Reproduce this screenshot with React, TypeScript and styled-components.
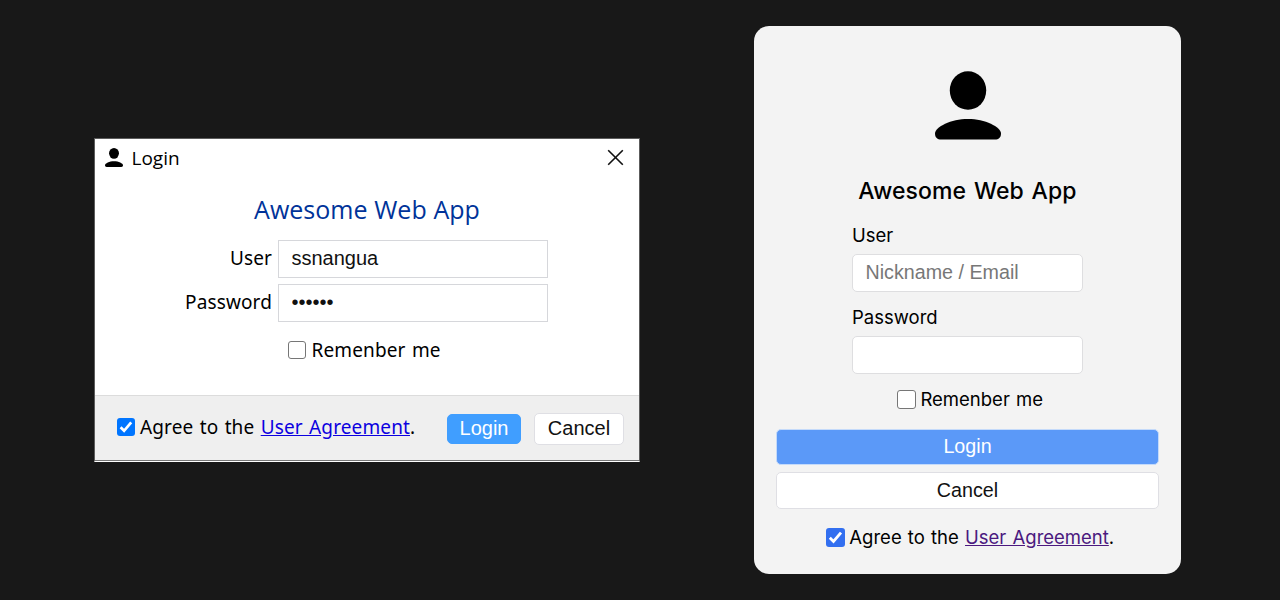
import React from 'react';
import styled, { createGlobalStyle, css } from 'styled-components';

const Global = createGlobalStyle`
  * { box-sizing: border-box; }
  body { margin: 0; background: #181818; color: #000; }
  p, h1, h2 { margin: 0; }
`;

const Stage = styled.main`
  display: flex;
  width: 1280px;
  height: 600px;
  padding: 26px 99px 26px 94px;
  justify-content: space-between;
  overflow: hidden;
`;

/* Shared controls */
const dialogText = css`
  font: 400 19px/24px "Noto Sans", sans-serif;
  letter-spacing: 0.12px;
  word-spacing: 1.3px;
`;

const cardText = css`
  font: 400 18.5px/24px Inter, sans-serif;
  word-spacing: 1px;
`;

const Input = styled.input`
  display: block;
  height: 38px;
  border: 1px solid #d6d7db;
  padding: 0 12px 2px 12.5px;
  background: #fff;
  color: #111;
  outline: none;
  font: 20px "Liberation Sans", Arial, sans-serif;
  &::placeholder { color: #777; opacity: 1; }
`;

const Button = styled.button<{ $primary?: boolean }>`
  display: flex;
  align-items: center;
  justify-content: center;
  padding: 0 0 2px;
  border: 1px solid #dfdfe4;
  border-radius: 5px;
  background: #fff;
  color: #111;
  font: 20px/24px "Liberation Sans", Arial, sans-serif;
  ${p => p.$primary && css`color: #fff;`}
`;

const CheckLabel = styled.label`
  display: flex;
  align-items: center;
  white-space: pre;
`;

const Box = styled.span<{ $size: number; $fill?: string }>`
  display: flex;
  flex: none;
  width: ${p => p.$size}px;
  height: ${p => p.$size}px;
  border: ${p => (p.$fill ? 'none' : '1.5px solid #767676')};
  border-radius: 3px;
  background: ${p => p.$fill || '#fff'};
`;

const Check = ({ size, fill }: { size: number; fill?: string }) => (
  <Box $size={size} $fill={fill}>
    {fill && (
      <svg width={size} height={size} viewBox="0 0 18 18">
        <path d="M3.6 9.3 L7.1 12.8 L14.2 4.4" fill="none" stroke="#fff" strokeWidth="2.7" />
      </svg>
    )}
  </Box>
);

const Person = ({ width, height }: { width: number; height: number }) => (
  <svg width={width} height={height} viewBox="0 0 66 69" preserveAspectRatio="none">
    <ellipse cx="33" cy="19.5" rx="18.2" ry="19.3" />
    <path d="M0 62.5 C0 56 16 48 33 48 S66 56 66 62.5 C66 66.5 63.5 68.6 60 68.6 H6 C2.5 68.6 0 66.5 0 62.5Z" />
  </svg>
);

/* Desktop dialog */
const Dialog = styled.section`
  display: flex;
  flex-direction: column;
  width: 546px;
  height: 324px;
  margin-top: 112px;
  border: 1px solid #5c5c5c;
  border-bottom-color: #fff;
  background: #fff;
`;

const TitleBar = styled.header`
  display: flex;
  align-items: center;
  height: 37px;
  padding: 0 15.5px 0 10px;
`;

const TitleText = styled.span`
  flex: 1;
  padding: 1px 0 0 8.5px;
  font: 400 19px/24px "Open Sans", sans-serif;
`;

const DialogBody = styled.div`
  flex: 1;
  padding-top: 15px;
`;

const DialogHeading = styled.h1`
  margin-bottom: 13px;
  text-align: center;
  color: #003399;
  font: 400 25px/36px "Open Sans", sans-serif;
  word-spacing: 0.3px;
`;

const DialogRow = styled.div`
  ${dialogText}
  display: grid;
  grid-template-columns: 177px 270px;
  column-gap: 6px;
  align-items: center;
  margin-bottom: 6px;
  text-align: right;
`;

const DialogCaption = styled.span`
  padding-bottom: 2px;
`;

const DialogRemember = styled(CheckLabel)`
  ${dialogText}
  gap: 5.6px;
  margin: 16px 0 0 193px;
`;

const DialogFooter = styled.footer`
  display: flex;
  align-items: center;
  height: 66px;
  padding: 0 15px 0 22px;
  border-top: 1px solid #dcdcdc;
  border-bottom: 1px solid #777;
  background: #efefef;
`;

const DialogAgree = styled(CheckLabel)`
  ${dialogText}
  flex: 1;
  gap: 5px;
  margin-bottom: 2px;
`;

const DialogLink = styled.a`
  color: #0c00e0;
  text-decoration: underline;
`;

const DialogButton = styled(Button)<{ $w: number }>`
  width: ${p => p.$w}px;
  height: 32px;
  margin-top: 2px;
  ${p => p.$primary && css`
    height: 30px;
    margin-right: 13px;
    border-color: #409eff;
    background: #409eff;
  `}
`;

/* Web card */
const Card = styled.section`
  display: flex;
  flex-direction: column;
  align-items: center;
  width: 427px;
  height: 548px;
  padding-top: 45px;
  border-radius: 15px;
  background: #f3f3f3;
`;

const CardHeading = styled.h2`
  margin: 35px 0 16px;
  font: 550 23px/32px Inter, sans-serif;
  letter-spacing: 0.1px;
  word-spacing: 1.5px;
`;

const CardField = styled.label`
  ${cardText}
  display: block;
  width: 231px;
  margin-bottom: 13px;
`;

const CardInput = styled(Input)`
  width: 231px;
  margin-top: 7px;
  border-radius: 5px;
  border-color: #dedee0;
  padding-bottom: 1px;
  font-size: 19.7px;
`;

const CardCheck = styled(CheckLabel)`
  ${cardText}
  gap: 4.5px;
  padding-left: 5px;
`;

const CardLink = styled.a`
  color: #4b197f;
  text-decoration: underline;
`;

const CardActions = styled.div`
  display: flex;
  flex-direction: column;
  gap: 7px;
  width: 383px;
  margin: 18px 0 16px;
`;

const CardButton = styled(Button)`
  height: 37px;
  font-size: 19.7px;
  ${p => p.$primary && css`
    height: 36px;
    border-color: #c4dafa;
    background: #5b99f8;
  `}
`;

export default function App() {
  return (
    <>
      <Global />
      <Stage>
        <Dialog>
          <TitleBar>
            <Person width={18} height={19} />
            <TitleText>Login</TitleText>
            <svg width="17" height="17" viewBox="0 0 17 17">
              <path d="M1.2 1.2 L15.8 15.8 M15.8 1.2 L1.2 15.8" stroke="#111" strokeWidth="1.6" />
            </svg>
          </TitleBar>
          <DialogBody>
            <DialogHeading>Awesome Web App</DialogHeading>
            <DialogRow>
              <DialogCaption>User</DialogCaption>
              <Input defaultValue="ssnangua" />
            </DialogRow>
            <DialogRow>
              <DialogCaption>Password</DialogCaption>
              <Input type="password" defaultValue="secret" />
            </DialogRow>
            <DialogRemember>
              <Check size={18} />
              <span>Remenber me</span>
            </DialogRemember>
          </DialogBody>
          <DialogFooter>
            <DialogAgree>
              <Check size={18} fill="#0075ff" />
              <span>Agree to the <DialogLink>User Agreement</DialogLink>.</span>
            </DialogAgree>
            <DialogButton $primary $w={74}>Login</DialogButton>
            <DialogButton $w={90}>Cancel</DialogButton>
          </DialogFooter>
        </Dialog>
        <Card>
          <Person width={66} height={69} />
          <CardHeading>Awesome Web App</CardHeading>
          <CardField>
            User
            <CardInput placeholder="Nickname / Email" />
          </CardField>
          <CardField>
            Password
            <CardInput type="password" />
          </CardField>
          <CardCheck>
            <Check size={19} />
            <span>Remenber me</span>
          </CardCheck>
          <CardActions>
            <CardButton $primary>Login</CardButton>
            <CardButton>Cancel</CardButton>
          </CardActions>
          <CardCheck>
            <Check size={19} fill="#326ff0" />
            <span>Agree to the <CardLink>User Agreement</CardLink>.</span>
          </CardCheck>
        </Card>
      </Stage>
    </>
  );
}
